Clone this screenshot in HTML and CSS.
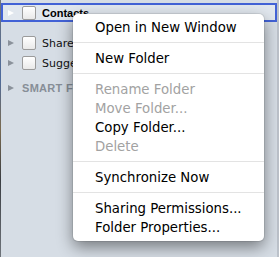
FILE: index.html
```html
<!DOCTYPE html>
<html lang="en">

<head>
    <meta charset="UTF-8">
    <meta name="viewport" content="width=device-width, initial-scale=1.0">
    <title>Folder Menu</title>
    <link rel="stylesheet" href="styles.css">
</head>

<body>
    <div class="window">
        <div class="edge-left"></div>
        <aside class="sidebar">
            <div class="row selected">
                <span class="disclosure open-white"></span>
                <span class="check"></span>
                <span class="label strong">Contacts</span>
            </div>
            <div class="row first-child">
                <span class="disclosure"></span>
                <span class="check"></span>
                <span class="label clipped">Shared Folders</span>
            </div>
            <div class="row">
                <span class="disclosure"></span>
                <span class="check"></span>
                <span class="label clipped">Suggested Contacts</span>
            </div>
            <div class="row group">
                <span class="disclosure"></span>
                <span class="label heading">Smart Folders</span>
            </div>
        </aside>
        <div class="edge-right"></div>
    </div>

    <ul class="context-menu">
        <li class="item">Open in New Window</li>
        <li class="separator"></li>
        <li class="item">New Folder</li>
        <li class="separator"></li>
        <li class="item disabled">Rename Folder</li>
        <li class="item disabled">Move Folder...</li>
        <li class="item">Copy Folder...</li>
        <li class="item disabled">Delete</li>
        <li class="separator"></li>
        <li class="item">Synchronize Now</li>
        <li class="separator"></li>
        <li class="item">Sharing Permissions...</li>
        <li class="item">Folder Properties...</li>
    </ul>
</body>

</html>
```

FILE: styles.css
```css
body {
    margin: 0;
    padding: 0;
    width: 279px;
    height: 257px;
    overflow: hidden;
    background-color: #d6dde5;
    font-family: "DejaVu Sans", sans-serif;
}

.window {
    display: flex;
    height: 257px;
}

.edge-left {
    width: 1px;
    background: linear-gradient(#6f747b, #4d6a9c 30%, #7a6a50 50%, #3a3d42 70%, #6f747b);
}

.sidebar {
    flex: 1;
    padding-top: 3px;
    background-color: #d6dde5;
}

.edge-right {
    width: 2px;
    background-color: #bcc2ca;
}

.row {
    display: flex;
    align-items: center;
    height: 20px;
    box-sizing: border-box;
    border: 2px solid transparent;
    padding-left: 5px;
}

.row.selected {
    height: 19px;
    border-color: #4262d6;
    background-color: #e1e7ee;
}

.row.first-child {
    margin-top: 11px;
}

.row.group {
    margin-top: 5px;
}

.disclosure {
    width: 0;
    height: 0;
    border-left: 6px solid #8b929b;
    border-top: 3.5px solid transparent;
    border-bottom: 3.5px solid transparent;
}

.disclosure.open-white {
    border-left-color: #ffffff;
}

.check {
    width: 14px;
    height: 14px;
    box-sizing: border-box;
    margin-left: 8px;
    border: 1px solid #9b9b9b;
    border-radius: 2px;
    background: linear-gradient(#ffffff, #e9e9e9);
}

.label {
    margin-left: 6px;
    font-size: 11px;
    color: #111111;
    white-space: nowrap;
}

/* the menu hides the rest of these names */
.label.clipped {
    width: 31px;
    overflow: hidden;
}

.label.strong {
    font-family: "Liberation Sans", sans-serif;
    font-weight: bold;
    color: #000000;
}

.label.heading {
    width: 51px;
    overflow: hidden;
    margin-left: 8px;
    font-family: "Liberation Sans", sans-serif;
    font-weight: bold;
    text-transform: uppercase;
    letter-spacing: 0.3px;
    color: #878e97;
}

/* context menu floats over the sidebar */
.context-menu {
    position: absolute;
    left: 73px;
    top: 14px;
    width: 191px;
    margin: 0;
    padding: 4px 0;
    list-style: none;
    background-color: #ffffff;
    border-radius: 5px;
    box-shadow: 0 0 0 1px rgba(0, 0, 0, 0.08), 0 6px 16px rgba(0, 0, 0, 0.45);
}

.item {
    height: 19px;
    line-height: 19px;
    padding-left: 22px;
    font-size: 13.3px;
    color: #000000;
    white-space: nowrap;
}

.item.disabled {
    color: #a2a2a2;
}

.separator {
    height: 1px;
    margin: 5px 0 6px;
    background-color: #e3e3e3;
}
```
